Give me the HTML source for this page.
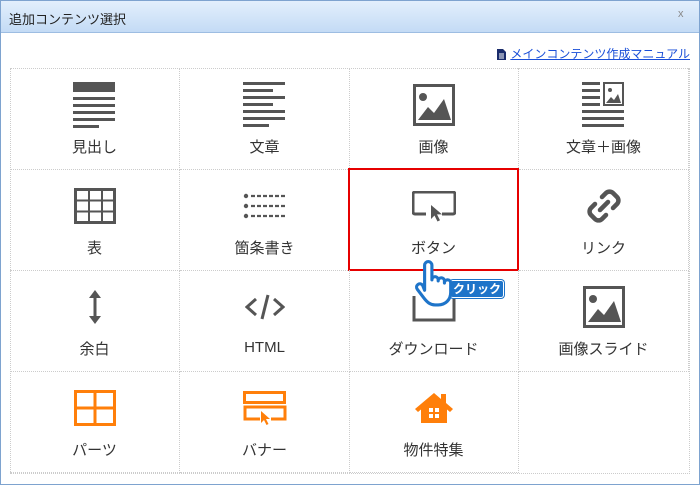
<!DOCTYPE html>
<html><head><meta charset="utf-8"><style>
*{margin:0;padding:0;box-sizing:border-box}
body{width:700px;height:485px;background:#fff;font-family:"Liberation Sans","Noto Sans CJK JP",sans-serif;position:relative;overflow:hidden}
.dlg{position:absolute;left:0;top:0;width:700px;height:485px;border:1px solid #7ea3cf;background:#fff}
.tb{position:absolute;left:0;top:0;width:698px;height:32px;background:linear-gradient(#e3effc,#c4dbf5);border-bottom:1px solid #9dbde2}
.tt{position:absolute;left:8px;top:8px;font-size:13px;color:#222}
.x{position:absolute;left:677px;top:7px;font-size:11px;color:#888}
.lnk{position:absolute;right:9px;top:44px;font-size:12px;color:#1a4fd8;text-decoration:underline}
.lnk svg{vertical-align:-2px;margin-right:4px}
.cell{position:absolute;width:170px;height:102px;border-right:1px dotted #ccc;border-bottom:1px dotted #ccc}
.cell svg{position:absolute;left:50%;top:37px;transform:translate(-50%,-50%)}
.cell .l{position:absolute;left:0;right:0;top:68px;text-align:center;font-size:15px;color:#333}
.grid{position:absolute;left:10px;top:68px;border:1px dotted #ccc;width:680px;height:406px}
</style></head><body>
<div class="dlg">
<div class="tb"><div class="tt">追加コンテンツ選択</div><div class="x">x</div></div>
<div class="lnk"><svg width="9" height="11" viewBox="0 0 9 11"><path d="M0 0h6l3 3v8H0z" fill="#1a2c6b"/><path d="M2 5h5M2 7h5M2 9h5" stroke="#fff"/></svg>メインコンテンツ作成マニュアル</div>
</div>
<div class="grid"></div>
<!-- row1 -->
<div class="cell" style="left:10px;top:68px"><svg width="44" height="46" viewBox="0 0 44 46"><rect x="0" y="0" width="42" height="10" fill="#555"/><rect x="0" y="15" width="42" height="3" fill="#555"/><rect x="0" y="22" width="42" height="3" fill="#555"/><rect x="0" y="29" width="42" height="3" fill="#555"/><rect x="0" y="36" width="42" height="3" fill="#555"/><rect x="0" y="43" width="26" height="3" fill="#555"/></svg><div class="l">見出し</div></div>
<div class="cell" style="left:180px;top:68px"><svg width="44" height="46" viewBox="0 0 44 46"><g fill="#555"><rect y="0" width="42" height="3"/><rect y="7" width="30" height="3"/><rect y="14" width="42" height="3"/><rect y="21" width="30" height="3"/><rect y="28" width="42" height="3"/><rect y="35" width="42" height="3"/><rect y="42" width="26" height="3"/></g></svg><div class="l">文章</div></div>
<div class="cell" style="left:349px;top:68px"><svg width="42" height="42" viewBox="0 0 42 42"><rect x="1.5" y="1.5" width="39" height="39" fill="none" stroke="#555" stroke-width="3"/><circle cx="10" cy="13" r="4" fill="#555"/><path d="M5 36l10-13 6 6 10-14 7 21z" fill="#555"/></svg><div class="l">画像</div></div>
<div class="cell" style="left:519px;top:68px"><svg width="44" height="46" viewBox="0 0 44 46"><g fill="#555"><rect y="0" width="18" height="3"/><rect y="7" width="18" height="3"/><rect y="14" width="18" height="3"/><rect y="21" width="18" height="3"/><rect y="28" width="42" height="3"/><rect y="35" width="42" height="3"/><rect y="42" width="42" height="3"/></g><rect x="22" y="1" width="19" height="22" fill="none" stroke="#555" stroke-width="2"/><circle cx="28" cy="8" r="2" fill="#555"/><path d="M24 21l5-6 3 3 4-6 3 9z" fill="#555"/></svg><div class="l">文章＋画像</div></div>
<!-- row2 -->
<div class="cell" style="left:10px;top:169px"><svg width="42" height="36" viewBox="0 0 42 36"><rect x="1.5" y="1.5" width="39" height="33" fill="none" stroke="#555" stroke-width="3"/><path d="M15 2v33M28 2v33M2 12.5h38M2 23.5h38" stroke="#555" stroke-width="2"/></svg><div class="l">表</div></div>
<div class="cell" style="left:180px;top:169px"><svg width="44" height="26" viewBox="0 0 44 26"><g fill="#555"><circle cx="3" cy="3" r="2.2"/><circle cx="3" cy="13" r="2.2"/><circle cx="3" cy="23" r="2.2"/></g><path d="M8 3h35M8 13h35M8 23h35" stroke="#555" stroke-width="2.2" stroke-dasharray="4 2"/></svg><div class="l">箇条書き</div></div>
<div class="cell" style="border:2px solid #e60000;width:171px;height:103px;top:168px;left:348px"><svg width="44" height="32" viewBox="0 0 44 32"><path d="M14 23H3a2 2 0 0 1-2-2V3a2 2 0 0 1 2-2h38a2 2 0 0 1 2 2v18a2 2 0 0 1-2 2H30" fill="none" stroke="#555" stroke-width="3"/><path d="M19 14v14l3.5-3.5 3 6 2.5-1.3-3-5.8h5z" fill="#555"/></svg><div class="l" style="top:67px">ボタン</div></div>
<div class="cell" style="left:519px;top:169px"><svg width="34" height="34" viewBox="0 0 34 34"><g fill="none" stroke="#555" stroke-width="4.5" stroke-linecap="round"><path d="M15 8l4-4a5 5 0 0 1 7 0l4 4a5 5 0 0 1 0 7l-4 4"/><path d="M19 26l-4 4a5 5 0 0 1-7 0l-4-4a5 5 0 0 1 0-7l4-4"/><path d="M13 21l8-8"/></g></svg><div class="l">リンク</div></div>
<!-- row3 -->
<div class="cell" style="left:180px;top:270px"><svg width="40" height="26" viewBox="0 0 40 26"><g fill="none" stroke="#555" stroke-width="3"><path d="M11 5L2 13l9 8M29 5l9 8-9 8M23 1l-6 24"/></g></svg><div class="l" style="top:69px">HTML</div></div>
<div class="cell" style="left:10px;top:270px"><svg width="14" height="36" viewBox="0 0 14 36"><path d="M7 3v30" stroke="#555" stroke-width="3"/><path d="M1 9L7 1l6 8zM1 27l6 8 6-8z" fill="#555"/></svg><div class="l">余白</div></div>
<div class="cell" style="left:349px;top:270px"><svg width="44" height="30" viewBox="0 0 44 30"><path d="M2 4v24h40V4" fill="none" stroke="#555" stroke-width="3"/><path d="M15 6h14l-7 8z" fill="#555"/></svg><div class="l">ダウンロード</div></div>
<div class="cell" style="left:519px;top:270px"><svg width="42" height="42" viewBox="0 0 42 42"><rect x="1.5" y="1.5" width="39" height="39" fill="none" stroke="#555" stroke-width="3"/><circle cx="10" cy="13" r="4" fill="#555"/><path d="M5 36l10-13 6 6 10-14 7 21z" fill="#555"/></svg><div class="l">画像スライド</div></div>
<!-- row4 -->
<div class="cell" style="left:10px;top:371px"><svg width="42" height="36" viewBox="0 0 42 36"><rect x="1.5" y="1.5" width="39" height="33" fill="none" stroke="#ff7f0a" stroke-width="3"/><path d="M21 2v33M2 18h38" stroke="#ff7f0a" stroke-width="3"/></svg><div class="l">パーツ</div></div>
<div class="cell" style="left:180px;top:371px"><svg width="44" height="34" viewBox="0 0 44 34"><rect x="1.5" y="1.5" width="40" height="10" fill="none" stroke="#ff7f0a" stroke-width="3"/><path d="M17 28H2V16h40v12H28" fill="none" stroke="#ff7f0a" stroke-width="3"/><path d="M18 20v12l3-3 2.5 5 2-1-2.5-5h4z" fill="#ff7f0a"/></svg><div class="l">バナー</div></div>
<div class="cell" style="left:349px;top:371px"><svg width="40" height="32" viewBox="0 0 40 32"><path d="M20 1L1 17l3 3 3-2.5V31h26V17.5l3 2.5 3-3-7-6V2h-5v5z" fill="#ff7f0a"/><g fill="#fff"><rect x="15" y="16" width="4" height="4"/><rect x="21" y="16" width="4" height="4"/><rect x="15" y="22" width="4" height="4"/><rect x="21" y="22" width="4" height="4"/></g></svg><div class="l">物件特集</div></div>
<!-- click badge & hand -->
<div style="position:absolute;left:450px;top:280px;width:54px;height:18px;background:#1e74c9;border:1px solid #fff;border-radius:3px;box-shadow:0 0 0 1px #1e74c9;color:#fff;font-size:12px;font-weight:bold;line-height:16px;text-align:center">クリック</div>
<svg style="position:absolute;left:414px;top:259px" width="40" height="48" viewBox="0 0 38 46"><path d="M10 30V6a3.5 3.5 0 0 1 7 0v14a3 3 0 0 1 6 0v1a3 3 0 0 1 6 0v2a3 3 0 0 1 6 0v9c0 7-5 12-12 12h-3c-5 0-8-3-11-7L3 29a3 3 0 0 1 5-4z" fill="#fff" stroke="#1e74c9" stroke-width="3" stroke-linejoin="round"/></svg>
</body></html>
